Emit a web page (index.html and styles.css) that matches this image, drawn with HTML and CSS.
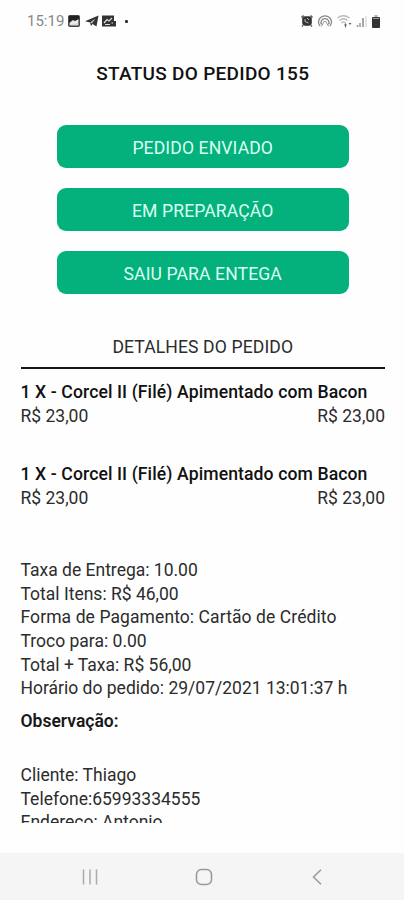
FILE: index.html
```html
<!DOCTYPE html>
<html lang="pt-BR">
<head>
<meta charset="utf-8">
<title>Status do pedido</title>
<link rel="stylesheet" href="styles.css">
</head>
<body>
<header class="statusbar">
  <div class="status-left">
    <span class="clock">15:19</span>
    <svg class="ic-image" width="12" height="12" viewBox="0 0 12 12"><rect x=".8" y=".8" width="10.4" height="10.4" rx="1" fill="#ddd" stroke="#444" stroke-width="1.5"/><path d="M1 1H11V4L7 6 5 5 1 8Z" fill="#222"/><path d="M3 9 5.500 7 7 8.500 10 5" fill="none" stroke="#fff"/></svg>
    <svg class="ic-send" width="14" height="12" viewBox="0 0 14 12"><path d="M0 6.200 13.500.5 11.500 11.500 7.500 9 6 11 5 7.500Z" fill="#333"/><path d="M5 7.500 10.500 3.500 7 8.500" fill="#bbb"/></svg>
    <svg class="ic-news" width="15" height="12" viewBox="0 0 15 12"><path d="M1 .5H13V6H15V11.500H1Z" fill="#333"/><path d="M3 8 6 4.500 8 6 11 3M4 9.500H9M10.500 8H12" stroke="#ddd" stroke-width="1.200" fill="none"/></svg>
    <span class="dot"></span>
  </div>
  <div class="status-right">
    <svg width="12" height="12" viewBox="0 0 12 12"><path d="M.5 2.500 2.500.5M11.500 2.500 9.500.5M2 10.500 1 11.500M10 10.500 11 11.500" stroke="#555" stroke-width="1.500"/><rect x="1.200" y="1.200" width="9.600" height="9.600" rx="3" fill="#333"/><path d="M4 4V6.500L7.500 8M6 3 8 5" stroke="#bbb" fill="none"/></svg>
    <svg width="16" height="12" viewBox="0 0 16 12"><g fill="none" stroke="#888" stroke-width="1.300"><path d="M3 11A6.500 6.200 0 1 1 13 11"/><path d="M4.500 9.500A4 4 0 1 1 11.500 9.500"/></g><path d="M4.500 11.500 7 6.500H9L11.500 11.500" stroke="#999" fill="none"/></svg>
    <svg width="15" height="13" viewBox="0 0 15 13"><g fill="none" stroke="#bbb" stroke-width="1.300"><path d="M.5 3Q6.500-1.500 12.500 3"/><path d="M2.500 5.500Q6.500 2 10.500 5.500"/><path d="M4.500 8Q6.500 6 8.500 8"/></g><path d="M7 10.500 8.500 8 10 10.500ZM11.500 8H14.500L13 10Z" fill="#666"/><path d="M8.500 10V12.500" stroke="#666"/></svg>
    <svg width="11" height="12" viewBox="0 0 11 12"><path d="M1.500 10V12M4 8V12" stroke="#999" stroke-width="1.500"/><path d="M7 3V12" stroke="#777" stroke-width="1.300"/><path d="M10 1V12" stroke="#ddd" stroke-width="1.500"/></svg>
    <svg class="ic-battery" width="8" height="13" viewBox="0 0 8 13"><path d="M2.500 1H5.500" stroke="#999" stroke-width="1.500"/><rect y="2" width="8" height="11" rx="1" fill="#333"/><path d="M1 3.500H7" stroke="#999"/></svg>
  </div>
</header>
<main class="screen">
  <h1>STATUS DO PEDIDO 155</h1>
  <div class="steps">
    <div class="step">PEDIDO ENVIADO</div>
    <div class="step">EM PREPARAÇÃO</div>
    <div class="step">SAIU PARA ENTEGA</div>
  </div>
  <h2>DETALHES DO PEDIDO</h2>
  <section class="item">
    <h3>1 X - Corcel II (Filé) Apimentado com Bacon</h3>
    <div class="prices"><span>R$ 23,00</span><span>R$ 23,00</span></div>
  </section>
  <section class="item">
    <h3>1 X - Corcel II (Filé) Apimentado com Bacon</h3>
    <div class="prices"><span>R$ 23,00</span><span>R$ 23,00</span></div>
  </section>
  <section class="summary">
    <p>Taxa de Entrega: 10.00</p>
    <p>Total Itens: R$ 46,00</p>
    <p class="payment">Forma de Pagamento: Cartão de Crédito</p>
    <p>Troco para: 0.00</p>
    <p>Total + Taxa: R$ 56,00</p>
    <p>Horário do pedido: 29/07/2021 13:01:37 h</p>
  </section>
  <p class="note">Observação:</p>
  <section class="client">
    <p>Cliente: Thiago</p>
    <p>Telefone:65993334555</p>
    <p>Endereço: Antonio</p>
  </section>
</main>
<nav class="navbar">
  <svg width="16" height="16" viewBox="0 0 16 16"><path d="M1.500.5V15.500M8 .5V15.500M14.500.5V15.500" stroke="#aaa" stroke-width="1.500"/></svg>
  <svg class="ic-home" width="18" height="18" viewBox="0 0 18 18"><rect x="1.500" y="1.500" width="15" height="15" rx="5" fill="none" stroke="#999" stroke-width="1.500"/></svg>
  <svg width="10" height="16" viewBox="0 0 10 16"><path d="M9 .7 1.500 8 9 15.300" fill="none" stroke="#999" stroke-width="1.500"/></svg>
</nav>
</body>
</html>
```
FILE: styles.css
```css
* { box-sizing: border-box; }
body {
  margin: 0;
  width: 404px;
  height: 900px;
  display: flex;
  flex-direction: column;
  overflow: hidden;
  background: #fefefe;
  color: #2c2c2c;
  font: 17.5px/23.65px Roboto, sans-serif;
}
h1, h2, h3, p { margin: 0; }
.statusbar {
  height: 42px;
  flex: none;
  display: flex;
  justify-content: space-between;
  padding: 0 24px 0 27px;
}
.status-left, .status-right { display: flex; align-items: center; }
.clock { color: #888; font-size: 15px; line-height: 20px; width: 36px; margin: 0 5px 1px 0; }
.ic-send { margin-left: 5px; }
.ic-news { margin-left: 2px; }
.dot { width: 3px; height: 3px; margin-left: 9px; background: #333; border-radius: 1px; }
.status-right { gap: 4px; }
.ic-battery { margin-left: 1px; }
.screen {
  height: 781px;
  flex: none;
  overflow: hidden;
  padding: 20px 19px 0 20.500px;
}
h1 {
  text-align: center;
  font-size: 19px;
  line-height: 24px;
  font-weight: 500;
  letter-spacing: 0.280px;
  color: #111;
}
.steps {
  display: grid;
  gap: 20px;
  margin: 39px 36px 0;
}
.step {
  height: 43px;
  border-radius: 9px;
  background: #04b17c;
  color: #d9fff1;
  text-align: center;
  font-size: 17.600px;
  letter-spacing: 0.1px;
  line-height: 46px;
}
h2 {
  margin-top: 39px;
  height: 36px;
  border-bottom: 2px solid #161616;
  text-align: center;
  font-size: 17.600px;
  font-weight: 400;
  letter-spacing: 0.1px;
  line-height: 28px;
}
.item { margin-top: 12px; height: 70px; }
h3 {
  font-size: 17.600px;
  font-weight: 500;
  letter-spacing: 0.1px;
  line-height: 23.650px;
  color: #111;
  white-space: nowrap;
}
.prices { display: flex; justify-content: space-between; }
.summary { margin-top: 26px; }
.payment { letter-spacing: 0.090px; }
.note { margin-top: 9.500px; font-weight: 600; color: #181818; }
.client { margin-top: 30px; }
.navbar {
  height: 47px;
  flex: none;
  margin-top: auto;
  display: flex;
  justify-content: space-between;
  align-items: center;
  padding: 0 82px;
  background: #f5f5f5;
}
.ic-home { margin-right: 3px; }
```
